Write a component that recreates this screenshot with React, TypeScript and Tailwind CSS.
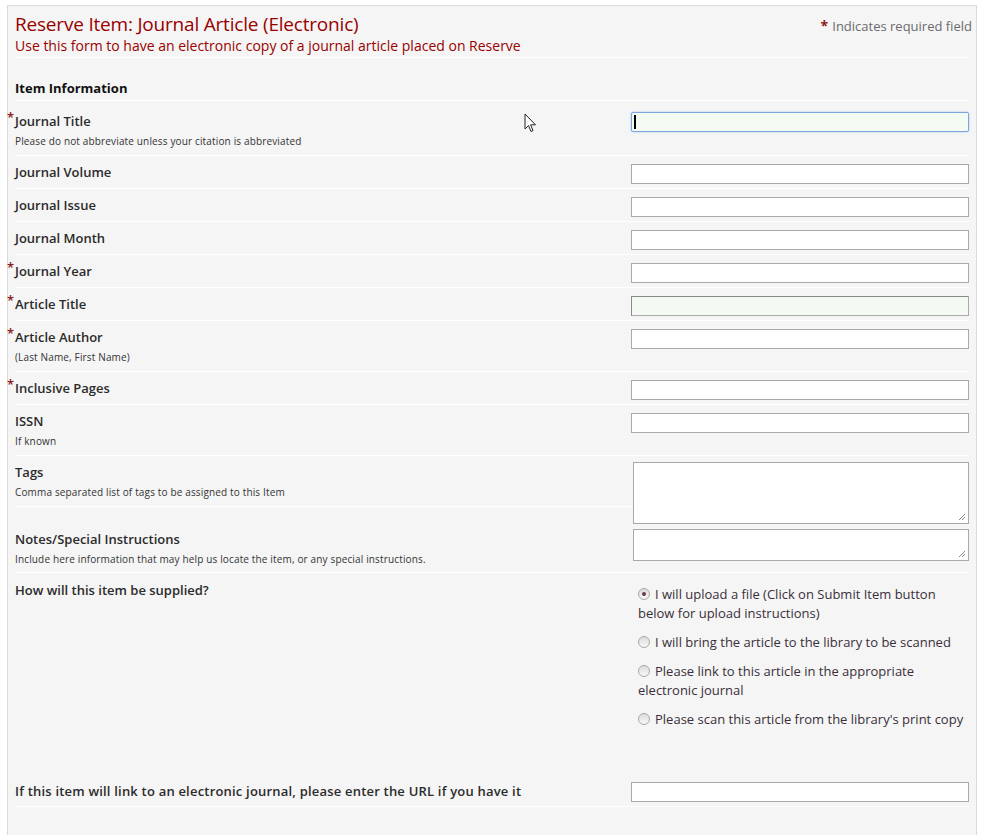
import React from "react";

const FONT = { fontFamily: '"Open Sans", "DejaVu Sans", sans-serif' };

function Req() {
  return (
    <span className="absolute -left-[8px] -top-[4px] text-[13px] text-[#8b1a1a]">*</span>
  );
}

interface RowProps {
  label: string;
  help?: string;
  required?: boolean;
  height: string;
  labelPad: string;
  labelClass?: string;
  children?: React.ReactNode;
  border?: boolean;
}

function Row({ label, help, required, height, labelPad, labelClass = "", children, border = true }: RowProps) {
  return (
    <div className={`flex ${height} ${border ? "border-b border-white" : ""}`}>
      <div className={`flex-1 ${labelPad}`}>
        <div className={`relative text-[13px] leading-[18px] font-semibold text-[#2b2b2b] ${labelClass}`}>
          {required && <Req />}
          {label}
        </div>
        {help && (
          <div className="mt-[4px] text-[10px] leading-[14px] tracking-[0.15px] text-[#333]">{help}</div>
        )}
      </div>
      <div className="w-[338px]">{children}</div>
    </div>
  );
}

function TextInput({ mt = "mt-[8px]", variant }: { mt?: string; variant?: "focus" | "green" }) {
  if (variant === "focus") {
    return (
      <div className={`${mt} h-[20px] rounded-[2px] border border-[#7ea6dc] bg-[#f4fbf3] shadow-[0_0_2px_#9ec0ec] flex items-center pl-[2px]`}>
        <span className="block w-[2px] h-[14px] bg-black" />
      </div>
    );
  }
  return (
    <div
      className={`${mt} h-[20px] border border-[#a9a9a9] ${
        variant === "green" ? "bg-[#f3faf1] border-t-[#8a8a8a] border-l-[#8a8a8a]" : "bg-white"
      }`}
    />
  );
}

function Resize() {
  return (
    <svg className="absolute right-[2px] bottom-[2px]" width="9" height="9" viewBox="0 0 9 9">
      <path d="M8 2 L2 8 M8 5 L5 8" stroke="#888" strokeWidth="1" />
    </svg>
  );
}

function Radio({ checked, children }: { checked?: boolean; children: React.ReactNode }) {
  return (
    <div className="text-[13px] leading-[19px] text-[#3a2f3a]">
      <span className="relative inline-block align-[-1px] mr-[5px] w-[12px] h-[12px] rounded-full border border-[#a8a8a8] bg-gradient-to-b from-[#dcdcdc] to-[#f8f8f8]">
        {checked && (
          <span className="absolute left-[3px] top-[3px] w-[4px] h-[4px] rounded-full bg-[#6e3848]" />
        )}
      </span>
      {children}
    </div>
  );
}

export default function App() {
  return (
    <div className="relative min-h-[835px] bg-white pt-[5px] pl-[7px]" style={FONT}>
      <div className="w-[970px] min-h-[830px] border border-b-0 border-[#dadada] bg-[#f5f5f5] px-[7px]">
        {/* header */}
        <div className="flex justify-between border-b border-white pt-[6px] h-[52px]">
          <div className="text-[#990000]">
            <div className="text-[19px] leading-[24px] tracking-[-0.2px]">Reserve Item: Journal Article (Electronic)</div>
            <div className="text-[14px] leading-[20px]">
              Use this form to have an electronic copy of a journal article placed on Reserve
            </div>
          </div>
          <div className="pt-[5px] text-[13px] leading-[18px] text-[#6b6b6b] -mr-[3px]">
            <span className="font-bold text-[#8b1a1a] text-[14px] mr-[4px]">*</span>
            Indicates required field
          </div>
        </div>

        {/* section */}
        <div className="h-[43px] border-b border-white pt-[21px]">
          <div className="text-[13px] leading-[18px] font-bold text-[#111]">Item Information</div>
        </div>

        <Row label="Journal Title" required height="h-[55px]" labelPad="pt-[11px]" help="Please do not abbreviate unless your citation is abbreviated">
          <TextInput mt="mt-[11px]" variant="focus" />
        </Row>
        <Row label="Journal Volume" height="h-[33px]" labelPad="pt-[7px]">
          <TextInput />
        </Row>
        <Row label="Journal Issue" height="h-[33px]" labelPad="pt-[7px]">
          <TextInput />
        </Row>
        <Row label="Journal Month" height="h-[33px]" labelPad="pt-[7px]">
          <TextInput />
        </Row>
        <Row label="Journal Year" required height="h-[33px]" labelPad="pt-[7px]">
          <TextInput />
        </Row>
        <Row label="Article Title" required height="h-[33px]" labelPad="pt-[7px]">
          <TextInput variant="green" />
        </Row>
        <Row label="Article Author" required height="h-[51px]" labelPad="pt-[7px]" help="(Last Name, First Name)">
          <TextInput />
        </Row>
        <Row label="Inclusive Pages" required height="h-[33px]" labelPad="pt-[7px]">
          <TextInput />
        </Row>
        <Row label="ISSN" height="h-[51px]" labelPad="pt-[7px]" help="If known">
          <TextInput />
        </Row>
        <Row label="Tags" height="h-[51px]" labelPad="pt-[7px]" help="Comma separated list of tags to be assigned to this Item">
          <div className="relative z-10 mt-[6px] ml-[2px] h-[62px] border border-[#a9a9a9] bg-white">
            <Resize />
          </div>
        </Row>
        <Row label="Notes/Special Instructions" height="h-[66px]" labelPad="pt-[23px]" help="Include here information that may help us locate the item, or any special instructions.">
          <div className="relative mt-[22px] ml-[2px] h-[32px] border border-[#a9a9a9] bg-white">
            <Resize />
          </div>
        </Row>
        <Row label="How will this item be supplied?" height="h-[194px]" labelPad="pt-[8px]" border={false}>
          <div className="pt-[12px] pl-[7px] flex flex-col gap-[10px]">
            <Radio checked>I will upload a file (Click on Submit Item button below for upload instructions)</Radio>
            <Radio>I will bring the article to the library to be scanned</Radio>
            <Radio>Please link to this article in the appropriate electronic journal</Radio>
            <Radio>Please scan this article from the library's print copy</Radio>
          </div>
        </Row>
        <Row
          label="If this item will link to an electronic journal, please enter the URL if you have it"
          height="h-[40px]"
          labelPad="pt-[15px]"
          labelClass="tracking-[0.2px]"
        >
          <TextInput mt="mt-[15px]" />
        </Row>
      </div>

      {/* mouse pointer */}
      <svg className="absolute left-[524px] top-[113px]" width="13" height="21" viewBox="0 0 13 21">
        <path d="M1 1 L1 16 L4.5 12.5 L7 18.5 L9 17.6 L6.6 11.8 L11.5 11.8 Z" fill="white" stroke="#222" strokeWidth="1" strokeLinejoin="round" />
      </svg>
    </div>
  );
}
